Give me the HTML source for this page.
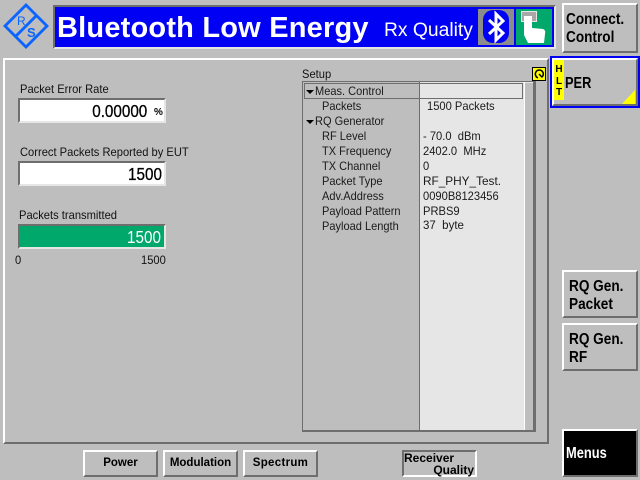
<!DOCTYPE html>
<html><head><meta charset="utf-8"><style>
html,body{margin:0;padding:0;background:#bebebe;}
body{width:640px;height:480px;position:relative;overflow:hidden;font-family:"Liberation Sans",sans-serif;color:#000;}
div{position:absolute;box-sizing:border-box;white-space:nowrap;}
.btn{background:#bebebe;border:2px solid;border-color:#fff #6e6e6e #6e6e6e #fff;font-weight:bold;}
.inp{left:18px;width:148px;height:25px;background:#fff;border:2px solid;border-color:#6e6e6e #e6e6e6 #e6e6e6 #6e6e6e;text-align:right;font-size:17.500px;line-height:22px;padding-right:2px;-webkit-text-stroke:.3px #000;}
.inp span{display:inline-block;transform:scaleX(.87);transform-origin:right center;}
.lab{font-size:12px;line-height:14px;color:#111;transform:scaleX(.93);transform-origin:left center;}
.r{font-size:12px;line-height:14px;color:#1a1a1a;transform:scaleX(.92);transform-origin:left center;}
.v{font-size:12px;line-height:14px;color:#1a1a1a;transform:scaleX(.93);transform-origin:left center;}
.tab{height:27px;top:450px;font-size:11.500px;line-height:23px;text-align:center;}
.sk{left:562px;width:76px;font-size:16px;line-height:18px;padding:6px 0 0 5px;}
.sk span{display:block;transform:scaleX(.85);transform-origin:left center;}
</style></head><body>
<svg style="position:absolute;left:0;top:0" width="56" height="56">
<path d="M26 5 L47 26 L26 47 L5 26 Z" fill="none" stroke="#0a64ff" stroke-width="2.800"/>
<path d="M36 16 L16 36" stroke="#0a64ff" stroke-width="2.800"/>
<text x="17" y="25" font-family="Liberation Sans" font-size="12" fill="#0a64ff">R</text>
<text x="27" y="37" font-family="Liberation Sans" font-size="13" font-weight="bold" fill="#0a64ff">S</text>
</svg>

<div style="left:53px;top:5px;width:503px;height:44px;background:#0000f5;border:2px solid;border-color:#6e6e6e #e6e6e6 #e6e6e6 #6e6e6e"></div>
<div style="left:57px;top:10px;font-size:29px;line-height:36px;font-weight:bold;color:#fff;letter-spacing:.2px">Bluetooth Low Energy</div>
<div style="left:384px;top:20px;font-size:19.300px;line-height:22px;color:#fff">Rx Quality</div>
<div style="left:478px;top:9px;width:36px;height:36px;background:#8c8c8c"></div>
<svg style="position:absolute;left:478px;top:9px" width="36" height="36">
<rect x="5" y="1" width="26" height="33" rx="10" fill="#0000f5"/>
<path d="M11 11 L25 24 L18 31 L18 5 L25 12 L11 25" fill="none" stroke="#fff" stroke-width="3"/>
</svg>
<div style="left:516px;top:9px;width:36px;height:36px;background:#00a86b"></div>
<svg style="position:absolute;left:516px;top:9px" width="36" height="36">
<rect x="5.500" y="2.500" width="15" height="10" fill="#a8a8a8" stroke="#e6e6e6"/>
<path d="M8 7 H16 V19 L27 20 Q30 21 29 25 L28 34 H12 L8 26 Z" fill="#fff"/>
</svg>

<div class="btn sk" style="top:3px;height:50px;padding:6px 0 0 2px"><span>Connect.</span><span>Control</span></div>

<div style="left:550px;top:56px;width:90px;height:52px;border:2px solid #0000f5;background:#bebebe"></div>
<div class="btn" style="left:552px;top:58px;width:86px;height:48px"></div>
<div style="left:554px;top:60px;width:10px;height:40px;background:#ffff00;font-size:10px;line-height:11.500px;text-align:center;font-weight:bold;padding-top:4px;white-space:normal">H<br>L<br>T</div>
<div style="left:565px;top:74px;font-size:16px;line-height:20px;font-weight:bold;transform:scaleX(.8);transform-origin:left center">PER</div>
<svg style="position:absolute;left:622px;top:90px" width="14" height="14"><path d="M13 0 V14 H0 Z" fill="#ffff00"/></svg>

<div style="left:3px;top:58px;width:546px;height:386px;border:2px solid;border-color:#fff #6e6e6e #6e6e6e #fff"></div>

<div class="lab" style="left:20px;top:82px">Packet Error Rate</div>
<div class="inp" style="top:98px;padding-right:17px"><span>0.00000</span></div>
<div style="left:154px;top:107px;font-size:10px;line-height:12px;font-weight:bold">%</div>
<div class="lab" style="left:20px;top:145px">Correct Packets Reported by EUT</div>
<div class="inp" style="top:161px"><span>1500</span></div>
<div class="lab" style="left:19px;top:208px">Packets transmitted</div>
<div class="inp" style="top:224px;background:#00a86b;color:#fff;-webkit-text-stroke:0;padding-right:3px"><span>1500</span></div>
<div class="lab" style="left:15px;top:253px">0</div>
<div class="lab" style="left:141px;top:253px">1500</div>

<div class="lab" style="left:302px;top:67px">Setup</div>
<div style="left:302px;top:81px;width:234px;height:351px;border:solid #6e6e6e;border-width:1px 3px 2px 1px"></div>
<div style="left:419px;top:82px;width:105px;height:348px;background:#e6e6e6;border-left:1px solid #6e6e6e"></div>
<div style="left:524px;top:82px;width:1px;height:348px;background:#fff"></div>
<div style="left:525px;top:82px;width:8px;height:1px;background:#e6e6e6"></div>
<div style="left:304px;top:83px;width:219px;height:16px;border:1px solid #6e6e6e;background:transparent"></div>
<svg style="position:absolute;left:306px;top:90px" width="10" height="6"><path d="M0 0 H8 L4 4 Z" fill="#000"/></svg>
<svg style="position:absolute;left:306px;top:120px" width="10" height="6"><path d="M0 0 H8 L4 4 Z" fill="#000"/></svg>

<div class="r" style="left:315px;top:84px">Meas. Control</div>
<div class="r" style="left:322px;top:99px">Packets</div>
<div class="r" style="left:315px;top:114px">RQ Generator</div>
<div class="r" style="left:322px;top:129px">RF Level</div>
<div class="r" style="left:322px;top:144px">TX Frequency</div>
<div class="r" style="left:322px;top:159px">TX Channel</div>
<div class="r" style="left:322px;top:174px">Packet Type</div>
<div class="r" style="left:322px;top:189px">Adv.Address</div>
<div class="r" style="left:322px;top:204px">Payload Pattern</div>
<div class="r" style="left:322px;top:219px">Payload Length</div>

<div class="v" style="left:427px;top:99px">1500 Packets</div>
<div class="v" style="left:423px;top:129px">- 70.0&nbsp; dBm</div>
<div class="v" style="left:423px;top:144px">2402.0&nbsp; MHz</div>
<div class="v" style="left:423px;top:159px">0</div>
<div class="v" style="left:423px;top:174px;transform:none;font-size:11.800px">RF_PHY_Test.</div>
<div class="v" style="left:423px;top:189px">0090B8123456</div>
<div class="v" style="left:423px;top:204px">PRBS9</div>
<div class="v" style="left:423px;top:219px;transform:none;font-size:11.500px">37&nbsp; byte</div>

<div style="left:532px;top:67px;width:14px;height:14px;background:#ffff00;border:1px solid #000"></div>
<svg style="position:absolute;left:532px;top:67px" width="14" height="14"><path d="M7 7 L10 10 A4 4 0 1 0 6 10.800" fill="none" stroke="#000" stroke-width="1.500"/></svg>

<div class="btn sk" style="top:270px;height:48px"><span>RQ Gen.</span><span>Packet</span></div>
<div class="btn sk" style="top:323px;height:48px"><span>RQ Gen.</span><span>RF</span></div>
<div class="btn" style="left:562px;top:429px;width:76px;height:48px;background:#000;color:#fff;font-size:15.500px;line-height:20px;padding:13px 0 0 2px"><span style="display:block;transform:scaleX(.83);transform-origin:left center">Menus</span></div>

<div class="btn tab" style="left:83px;width:75px">Power</div>
<div class="btn tab" style="left:163px;width:75px">Modulation</div>
<div class="btn tab" style="left:243px;width:75px"><span style="letter-spacing:.3px">Spectrum</span></div>
<div style="left:402px;top:450px;width:75px;height:27px;border:2px solid;border-color:#6e6e6e #fff #fff #6e6e6e;font-size:12px;line-height:12px;font-weight:bold"><span style="position:absolute;left:0;top:0">Receiver</span><span style="position:absolute;right:1px;top:12px">Quality</span></div>
</body></html>
